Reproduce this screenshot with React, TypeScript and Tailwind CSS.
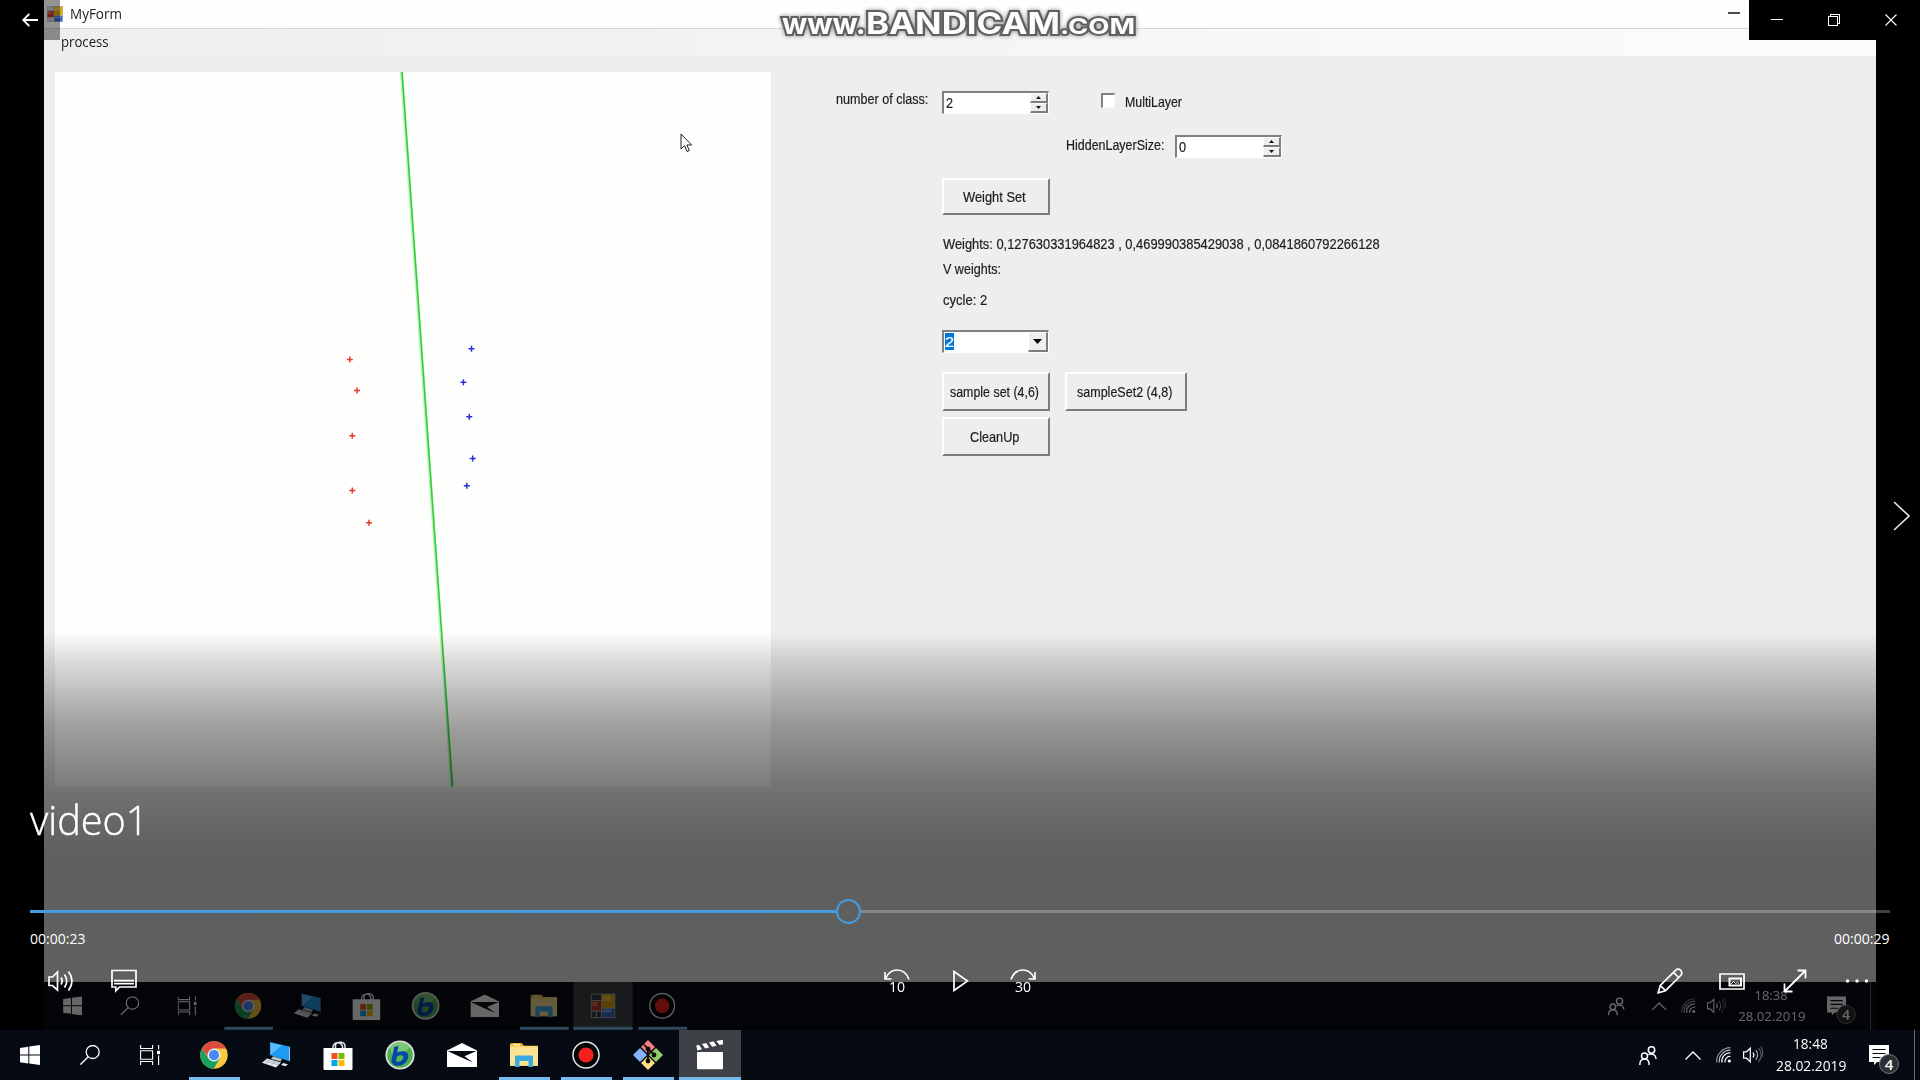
import React, { useLayoutEffect, useRef } from 'react';

/* Text squeezed or stretched horizontally to an exact width. */
function Fit({ w, className = '', children }: { w: number; className?: string; children: React.ReactNode }) {
  const ref = useRef<HTMLSpanElement>(null);
  useLayoutEffect(() => {
    const el = ref.current;
    if (!el) return;
    const apply = () => {
      if (el.offsetWidth) el.style.transform = `scaleX(${w / el.offsetWidth})`;
    };
    apply();
    document.fonts?.ready.then(apply);
  }, [w]);
  return (
    <span className={`block shrink-0 whitespace-pre ${className}`} style={{ width: w }}>
      <span ref={ref} className="inline-block origin-left align-top">
        {children}
      </span>
    </span>
  );
}

function Label({ w, className = '', children }: { w: number; className?: string; children: string }) {
  return (
    <Fit w={w} className={`font-["Liberation_Sans",sans-serif] text-[14.5px] leading-[18px] text-[#1c1c1c] [-webkit-text-stroke:0.2px] ${className}`}>
      {children}
    </Fit>
  );
}

function Spinner({ value, className = '' }: { value: string; className?: string }) {
  const btn =
    'flex h-[10px] w-[18px] items-center justify-center border-t border-l border-r-2 border-b-2 border-t-white border-l-white border-r-[#7d7d7d] border-b-[#7d7d7d] bg-[#eeeeed]';
  return (
    <div className={`flex h-[23px] w-[107px] shrink-0 justify-between border-t-2 border-l-2 border-r border-b border-t-[#808080] border-l-[#808080] border-r-white border-b-white bg-white ${className}`}>
      <Label w={7} className="ml-[2px] mt-px">{value}</Label>
      <div className="flex flex-col">
        <div className={btn}>
          <svg width="5" height="3" viewBox="0 0 5 3"><path d="M0 3 2.5 0 5 3z" fill="#111" /></svg>
        </div>
        <div className={btn}>
          <svg width="5" height="3" viewBox="0 0 5 3"><path d="M0 0 2.5 3 5 0z" fill="#111" /></svg>
        </div>
      </div>
    </div>
  );
}

function Button({ w, className = '', children }: { w: number; className?: string; children: string }) {
  return (
    <div className={`flex shrink-0 items-center justify-center border-t-2 border-l-2 border-r-2 border-b-2 border-t-white border-l-white border-r-[#7c7c7c] border-b-[#7c7c7c] pr-[3px] ${className}`}>
      <Label w={w}>{children}</Label>
    </div>
  );
}

function FormsIcon({ size, cell = '#3a3d48' }: { size: number; cell?: string }) {
  return (
    <svg width={size} height={size} viewBox="0 0 26 26">
      <rect width="26" height="26" fill="#b9bcc4" />
      <rect x="1" y="1" width="10" height="6" fill={cell} />
      <rect x="1" y="8" width="10" height="10" fill="#c0392b" />
      <rect x="2" y="9" width="5" height="4" fill="#e27a63" />
      <rect x="12" y="1" width="13" height="14" fill="#dca60c" />
      <rect x="13" y="2" width="8" height="6" fill="#f3cc4a" />
      <rect x="12" y="16" width="13" height="9" fill="#3a68c8" />
      <rect x="13" y="17" width="9" height="3" fill="#7ea2ea" />
      <rect x="1" y="19" width="4.5" height="6" fill={cell} />
      <rect x="6.5" y="19" width="4.5" height="6" fill={cell} />
    </svg>
  );
}

const icons = {
  windows: (
    <svg width="20" height="20" viewBox="0 0 20 20" fill="#fff">
      <path d="M0 2.900 8.300 1.700V9.500H0zM9.300 1.500 20 0v9.500H9.300zM0 10.500h8.300v7.900L0 17.200zM9.300 10.500H20V20L9.300 18.500z" />
    </svg>
  ),
  search: (
    <svg width="20" height="20" viewBox="0 0 20 20" fill="none" stroke="#fff" strokeWidth="1.300">
      <circle cx="12.700" cy="7" r="6.500" />
      <path d="M8.200 11.800.4 19.600" />
    </svg>
  ),
  taskview: (
    <svg width="20" height="20" viewBox="0 0 20 20" fill="none" stroke="#fff" strokeWidth="1.100">
      <path d="M.6 0v3.500h12V0M.6 20v-3.500h12V20M.6 5.700h12v8.600H.6zM18.600 0v4.500M18.600 10.500V20" />
      <rect x="17" y="5.800" width="3" height="3.400" fill="#fff" stroke="none" />
    </svg>
  ),
  chrome: (
    <svg width="28" height="28" viewBox="0 0 48 48">
      <circle cx="24" cy="24" r="23.500" fill="#fbc83c" />
      <path d="M3.650 12.250 14.300 30 24 34 34 29.500 23.500 47.500A23.500 23.500 0 0 1 3.650 12.250z" fill="#1ba15f" />
      <path d="M3.650 12.250A23.500 23.500 0 0 1 44.800 13H24L14 28z" fill="#dc4b3e" />
      <circle cx="24" cy="24" r="11" fill="#f4f4f4" />
      <circle cx="24" cy="24" r="8.800" fill="#4a8af4" />
    </svg>
  ),
  computer: (
    <svg width="28" height="26" viewBox="0 0 28 26">
      <path d="M8 0 27 4.500V19L8 13z" fill="#1e9bf0" />
      <path d="M8.500.8 20 3.400 8.500 12.500z" fill="#5cbcfb" />
      <path d="M27 4.500 28 5v14l-1 .5z" fill="#9cc9ea" />
      <path d="M11 14.200 20 17l-1.500 2.500L9 17z" fill="#b9c3cc" />
      <path d="M5 16.500 19 20.500 14 25.500 0 20.800z" fill="#e3e8ec" />
      <path d="M3 19 17 23M5 17.700 18 21.700M8 17.500 4 22M13 19l-4 4.500" stroke="#9ba6ae" strokeWidth=".6" />
      <path d="m21 21 5 1.300-2.500 2-4.500-1.300z" fill="#e3e8ec" />
    </svg>
  ),
  store: (
    <svg width="30" height="30" viewBox="0 0 30 30">
      <path d="M10 9V6.500a5 5.500 0 0 1 9.500 0V9M12.500 9V4.500a5 4 0 0 1 9.500 2V9" fill="none" stroke="#e8e8e8" strokeWidth="1.500" />
      <path d="M.5 8h29v21a1 1 0 0 1-1 1h-27a1 1 0 0 1-1-1z" fill="#fff" />
      <path d="M8.500 13h6v6h-6z" fill="#f25022" />
      <path d="M15.500 13h6v6h-6z" fill="#7fba00" />
      <path d="M8.500 20h6v6h-6z" fill="#00a4ef" />
      <path d="M15.500 20h6v6h-6z" fill="#ffb900" />
    </svg>
  ),
  bsplayer: (
    <svg width="30" height="30" viewBox="0 0 30 30">
      <circle cx="15" cy="15" r="13.700" fill="#4cb04f" stroke="#dcdedc" strokeWidth="1.800" />
      <path d="M5 7a13 13 0 0 1 20 0c-3 4-6 5-9 5l-9 3z" fill="#8fd488" opacity=".7" />
      <path d="M9 7 13.500 6 12.300 12.500C17 10.200 23.500 11 23.300 16c-.2 5-4.300 9.800-10 9.800-4.800 0-7.300-2.300-6.800-6.300L8.800 9z" fill="#0b45aa" />
      <path d="m12 16.500-1 4.500c1 1.800 6.900.5 7.400-3.800.2-2.400-4-2.400-6.400-.7z" fill="#56b852" />
    </svg>
  ),
  mail: (
    <svg width="30" height="24" viewBox="0 0 30 24">
      <path d="M0 7.500 15 0 30 7.500V24H0z" fill="#fff" />
      <path d="M.5 8H29.500L17.500 13.300 26 19.500 12.800 13.800z" fill="#070b12" />
    </svg>
  ),
  explorer: (
    <svg width="28" height="24" viewBox="0 0 28 24">
      <path d="M0 .8h12l1.500 2H28V22a.8.800 0 0 1-.8.800H.8A.8.800 0 0 1 0 22z" fill="#f8d775" />
      <path d="M1 0h10.500l2 3H1z" fill="#e9b41b" />
      <path d="M3 1h7v1.500H3z" fill="#fff" opacity=".8" />
      <path d="M0 4.500h28V22a.8.800 0 0 1-.8.800H.8A.8.800 0 0 1 0 22z" fill="#fde394" />
      <path d="M5 24V13.500a1 1 0 0 1 1-1h16a1 1 0 0 1 1 1V24h-4.500v-6h-9v6z" fill="#38ace0" />
    </svg>
  ),
  record: (
    <svg width="28" height="28" viewBox="0 0 28 28">
      <circle cx="14" cy="14" r="13" fill="#050505" stroke="#e6e6e6" strokeWidth="1.500" />
      <circle cx="14" cy="14" r="7.600" fill="#f4201f" />
    </svg>
  ),
  git: (
    <svg width="30" height="30" viewBox="0 0 30 30">
      <path d="M15 0 22 7 15 14 8 7z" fill="#f27f7d" />
      <path d="M23 8 30 15 23 22 16 15z" fill="#8ed069" />
      <path d="M7 8 14 15 7 22 0 15z" fill="#85b2fb" />
      <path d="M15 16 22 23 15 30 8 23z" fill="#fbe083" />
      <path d="M11 4.500 15 9v12M15 9l6.500 6" fill="none" stroke="#0b0b0d" strokeWidth="1.800" />
      <circle cx="15" cy="9" r="2.400" fill="#0b0b0d" />
      <circle cx="21" cy="15" r="2.400" fill="#0b0b0d" />
      <circle cx="15" cy="21" r="2.400" fill="#0b0b0d" />
    </svg>
  ),
  clapper: (
    <svg width="28" height="30" viewBox="0 0 28 30">
      <rect x="1" y="12" width="26" height="17.300" rx="1" fill="#fff" />
      <path d="M.3 5.500 3 4.700l3 4.600-4.700 1.200zM6 4 10.200 3l3 4.500-4 1zM13 2.400 17.500 1.300l3 4.500-4.300 1zM20.300.9 26.800-.2 27 4.200l-3.500.8z" fill="#fff" />
    </svg>
  ),
  forms: <FormsIcon size={26} />,
};

type TaskApp = { icon: keyof typeof icons; open?: boolean; active?: boolean };

const pinned: TaskApp[] = [
  { icon: 'chrome', open: true },
  { icon: 'computer' },
  { icon: 'store' },
  { icon: 'bsplayer' },
  { icon: 'mail' },
  { icon: 'explorer', open: true },
];

function VolumeTray() {
  return (
    <svg width="21" height="18" viewBox="0 0 21 18" fill="none" stroke="#fff" strokeWidth="1.200">
      <path d="M.6 5.800H3.500L7.300 2.200V15.800L3.500 12.200H.6z" />
      <path d="M10 6.500q1.800 2.500 0 5" />
      <path d="M12.800 4.200q3.600 4.800 0 9.600" opacity=".65" />
      <path d="M15.600 2.200q5 6.800 0 13.600M17.800.5q2.500 4 1.500 10.500" opacity=".3" />
    </svg>
  );
}

function Taskbar({ apps, time }: { apps: TaskApp[]; time: string }) {
  return (
    <div className="flex h-[50px] w-[1920px] bg-[#060b13] text-white">
      <div className="flex w-[60px] items-center justify-center">{icons.windows}</div>
      <div className="flex w-[60px] items-center justify-center">{icons.search}</div>
      <div className="flex w-[63px] items-center justify-center pr-[3px]">{icons.taskview}</div>
      {apps.map((a, i) => (
        <div key={i} className={`flex w-[62px] flex-col items-center ${a.active ? 'bg-[#3e4145]' : ''}`}>
          <div className="flex h-[47px] items-center pr-px pt-[2px]">{icons[a.icon]}</div>
          {a.open && <div className={a.active ? 'h-[3px] w-[62px] bg-[#76b9ed]' : 'h-[3px] w-[51px] bg-[#76b9ed]'} />}
        </div>
      ))}
      <div className="ml-auto flex h-[50px] items-center">
        <svg className="mr-[28px]" width="18" height="19" viewBox="0 0 18 19" fill="none" stroke="#fff" strokeWidth="1.500">
          <circle cx="12.500" cy="4" r="3.200" />
          <path d="M9.500 8.600q6.500-2 7.700 4.200" />
          <circle cx="5.500" cy="10" r="3" />
          <path d="M.8 19q0-6 4.700-6t4.700 6" />
        </svg>
        <svg className="mr-[15px]" width="16" height="9" viewBox="0 0 16 9" fill="none" stroke="#fff" strokeWidth="1.300">
          <path d="M.5 8.500 8 1l7.500 7.500" />
        </svg>
        <svg className="mr-[12px]" width="15" height="16" viewBox="0 0 15 16" fill="none" stroke="#fff" strokeWidth="1.200">
          <path d="M9 15.500A5 5 0 0 1 14.500 9.500" />
          <path d="M6 15.500A8 8 0 0 1 14.500 6" />
          <path d="M3.300 15.500A11 11 0 0 1 14.500 3.200" opacity=".75" />
          <path d="M.6 15.500A14 14 0 0 1 14.500.6" opacity=".55" />
          <circle cx="13.300" cy="14" r="1.600" fill="#fff" stroke="none" />
        </svg>
        <VolumeTray />
        <div className='ml-[12px] flex w-[70px] flex-col items-start font-["Open_Sans",sans-serif] text-[14px] leading-[22.500px]'>
          <Fit w={35} className="ml-[17px]">{time}</Fit>
          <Fit w={70}>28.02.2019</Fit>
        </div>
        <div className="relative ml-[23px] mr-[25px] h-[20px] w-[20px]">
          <svg width="20" height="20" viewBox="0 0 20 20">
            <path d="M0 0h20v17H8l-3 3v-3H0z" fill="#fff" />
            <path d="M3.500 4.500h13M3.500 8.500h13M3.500 12.500h8" stroke="#060b13" strokeWidth="1.200" />
          </svg>
          <div className='absolute left-[10px] top-[9px] flex h-[20px] w-[20px] items-center justify-center rounded-full border border-[#77797c] bg-[#2b2e33] font-["Open_Sans",sans-serif] text-[15px] font-semibold leading-none'>
            4
          </div>
        </div>
        <div className="h-[50px] w-[6px] border-l border-[#6a6d72]" />
      </div>
    </div>
  );
}

const red = [[349.8, 359.5], [357, 390.5], [352.3, 435.7], [352.3, 490.6], [369, 522.7]];
const blue = [[471.5, 348.7], [463.4, 382.2], [469.3, 416.7], [472.7, 458.5], [466.8, 485.8]];
const cross = (p: number[][]) => p.map(([x, y]) => `M${x - 55 - 3} ${y - 72}h6M${x - 55} ${y - 72 - 3}v6`).join('');

function Plot() {
  return (
    <div className="relative ml-[11px] mt-[16px] h-[715px] w-[716px] shrink-0 bg-[#fefefd]">
      <svg width="716" height="715" viewBox="0 0 716 715" fill="none">
        <path d="M346.500 0 397 715" stroke="#b4f5b4" strokeWidth="3.200" />
        <path d="M347 0 397.500 715" stroke="#35c93c" strokeWidth="1.500" />
        <path d={cross(red)} stroke="#e8382c" strokeWidth="1.500" />
        <path d={cross(blue)} stroke="#2a30e0" strokeWidth="1.500" />
      </svg>
      <svg className="absolute left-[625px] top-[61px]" width="12" height="20" viewBox="0 0 12 20">
        <path d="M1 1v15l3.600-3.400L7 18.500l2.300-1-2.400-5.500h4.700z" fill="#fff" stroke="#222" strokeWidth="1" />
      </svg>
    </div>
  );
}

function Logo() {
  const s = 'font-["Inter",sans-serif] font-bold text-[#fdfdfd] [-webkit-text-stroke:4px_#60605e] [paint-order:stroke_fill] [filter:drop-shadow(0_0_2px_#8a8a88)]';
  return (
    <div className="absolute left-[738px] top-[8px] flex h-[30px] items-baseline">
      <Fit w={84} className={`text-[28px] leading-[30px] ${s}`}>www.</Fit>
      <Fit w={194} className={`text-[30px] leading-[30px] ${s}`}>BANDICAM</Fit>
      <Fit w={75} className={`text-[22px] leading-[30px] ${s}`}>.COM</Fit>
    </div>
  );
}

function FormWindow() {
  return (
    <div className="relative flex h-[982px] flex-col bg-[#eeeeed]">
      <div className="flex h-[29px] items-center justify-between border-b border-[#d6d6d6] bg-[#fefefe] pl-[3px] pr-[136px]">
        <div className="flex items-center gap-[7px]">
          <FormsIcon size={16} cell="#d4d4d6" />
          <Fit w={52} className='font-["Open_Sans",sans-serif] text-[14px] leading-[20px] text-[#1b1b1b]'>MyForm</Fit>
        </div>
        <div className="mb-[3px] h-[2px] w-[12px] bg-[#4a4a4a]" />
      </div>
      <div className="flex h-[27px] bg-linear-to-r from-[#eeeeed] to-[#fcfcfa] pl-[17px] pt-[3px]">
        <Fit w={48} className='font-["Open_Sans",sans-serif] text-[14px] leading-[20px] text-[#1b1b1b]'>process</Fit>
      </div>
      <div className="flex">
        <Plot />
        <div className="flex flex-col pl-[65px] pt-[34px]">
          <div className="flex items-start">
            <Label w={92}>number of class:</Label>
            <Spinner value="2" className="ml-[14px] mt-px" />
            <div className="ml-[52px] mt-[3px] h-[15px] w-[14px] border-t-2 border-l-2 border-r border-b border-t-[#808080] border-l-[#808080] border-r-[#f8f8f8] border-b-[#f8f8f8] bg-white" />
            <Label w={57} className="ml-[10px] mt-[3px]">MultiLayer</Label>
          </div>
          <div className="ml-[230px] mt-[21px] flex items-start">
            <Label w={98} className="mt-px">HiddenLayerSize:</Label>
            <Spinner value="0" className="ml-[11px]" />
          </div>
          <div className="ml-[106px] flex flex-col pt-[20px]">
            <Button w={63} className="h-[37px] w-[108px]">Weight Set</Button>
            <Label w={437} className="ml-px mt-[20px]">Weights: 0,127630331964823 , 0,469990385429038 , 0,0841860792266128</Label>
            <Label w={58} className="ml-px mt-[7px]">V weights:</Label>
            <Label w={44} className="ml-px mt-[13px]">cycle: 2</Label>
            <div className="mt-[21px] flex h-[23px] w-[107px] justify-between border-t-2 border-l-2 border-r border-b border-t-[#808080] border-l-[#808080] border-r-white border-b-white bg-white">
              <Label w={9} className="ml-px mt-px h-[17px] overflow-hidden bg-[#0078d7] leading-[17px] !text-white">2</Label>
              <div className="flex h-[20px] w-[20px] items-center justify-center border-t border-l border-r-2 border-b-2 border-t-white border-l-white border-r-[#7d7d7d] border-b-[#7d7d7d] bg-[#eeeeed]">
                <svg width="9" height="5" viewBox="0 0 9 5"><path d="M0 0h9L4.500 5z" fill="#000" /></svg>
              </div>
            </div>
            <div className="mt-[19px] flex gap-[15px]">
              <Button w={89} className="h-[39px] w-[108px]">sample set (4,6)</Button>
              <Button w={95} className="h-[39px] w-[122px]">sampleSet2 (4,8)</Button>
            </div>
            <Button w={49} className="mt-[6px] h-[39px] w-[108px]">CleanUp</Button>
          </div>
        </div>
      </div>
      <Logo />
    </div>
  );
}

function Jump({ label, flip }: { label: string; flip?: boolean }) {
  return (
    <div className="flex w-[26px] flex-col items-center">
      <svg width="26" height="11" viewBox="0 0 26 11" className={flip ? 'scale-x-[-1]' : ''} fill="none" stroke="#fff" strokeWidth="1.600">
        <path d="M25 10.500C22.500 3.500 17.500 1 13 1 8 1 4 4 1.500 9.500M1 3v7h6.500" />
      </svg>
      <Fit w={16} className='-mt-px font-["Open_Sans",sans-serif] text-[15px] leading-[14px] text-white'>{label}</Fit>
    </div>
  );
}

function PlayerOverlay() {
  return (
    <div className="absolute inset-0 flex flex-col text-white">
      <div className="flex h-[40px] items-start justify-between">
        <div className="flex h-[40px] w-[60px] items-center bg-black/42 pl-[22px]">
          <svg width="16" height="14" viewBox="0 0 16 14" fill="none" stroke="#fff" strokeWidth="1.800">
            <path d="M16 7H1.200M7.300.8 1.200 7l6.100 6.200" />
          </svg>
        </div>
        <div className="flex h-[40px] w-[171px] items-center bg-black">
          <svg width="171" height="40" viewBox="0 0 171 40" fill="none" stroke="#fff" shapeRendering="crispEdges">
            <path d="M22 19.500h12M79.500 16.500h9v9h-9zM81.500 16v-1.500h9v9H89" />
            <path d="m136.500 14.500 11 11m0-11-11 11" shapeRendering="auto" strokeWidth="1.100" />
          </svg>
        </div>
      </div>
      <div className="flex h-[592px] items-end justify-end pb-[101px] pr-[10px]">
        <svg width="17" height="30" viewBox="0 0 17 30" fill="none" stroke="#e8e8e8" strokeWidth="1.600">
          <path d="m1 1 15 14L1 29" />
        </svg>
      </div>
      <div className="flex flex-1 flex-col bg-[linear-gradient(to_bottom,rgba(0,0,0,0)_0px,rgba(0,0,0,0.14)_30px,rgba(0,0,0,0.376)_95px,rgba(0,0,0,0.505)_150px,rgba(0,0,0,0.57)_190px,rgba(0,0,0,0.6)_225px)] px-[30px]">
        <Fit w={118} className='mt-[159px] font-["Open_Sans",sans-serif] text-[41px] font-light leading-[56px] [-webkit-text-stroke:0.4px]'>video1</Fit>
        <div className="mt-[52px] flex h-[25px] items-center">
          <div className="h-[3px] w-[806px] bg-[#429ce3]" />
          <div className="h-[25px] w-[25px] rounded-full border-2 border-[#429ce3]" />
          <div className="h-[3px] flex-1 bg-white/25" />
        </div>
        <div className='mt-[4px] flex justify-between pr-px font-["Open_Sans",sans-serif] text-[14px] leading-[22px]'>
          <Fit w={55}>00:00:23</Fit>
          <Fit w={55}>00:00:29</Fit>
        </div>
        <div className="mt-[18px] flex h-[26px] items-center pl-[18px] pr-[19px]">
          <svg width="26" height="22" viewBox="0 0 26 22" fill="none" stroke="#fff" strokeWidth="1.700">
            <path d="M1 7h3.500L9.500 2v18L4.500 15.500H1z" />
            <path d="M13 7.500q2.400 3.500 0 7M16.500 4.500q4.500 6.500 0 13M20.500 1.500q7 9.500 0 19" />
          </svg>
          <svg className="ml-[37px]" width="26" height="24" viewBox="0 0 26 24" fill="none" stroke="#fff" strokeWidth="1.700">
            <path d="M1 1.500h24v16.500H8.500L4.800 21.800V18H1zM3 11.700h20M3 14.700h20" />
          </svg>
          <div className="ml-[747px] flex items-center">
            <Jump label="10" />
            <svg className="ml-[43px]" width="16" height="22" viewBox="0 0 16 22" fill="none" stroke="#fff" strokeWidth="1.700">
              <path d="M1 1.500v19L14.500 11z" />
            </svg>
            <div className="ml-[41px]"><Jump label="30" flip /></div>
          </div>
          <div className="ml-auto flex items-center pr-[2px]">
            <svg width="26" height="26" viewBox="0 0 26 26" fill="none" stroke="#fff" strokeWidth="1.700">
              <path d="M1.200 24.800 3.300 17.500 18.500 2.300a3.300 3.300 0 0 1 5.200 5.200L8.500 22.700zM3.300 17.500l5.200 5.200M16.500 4.300l5.200 5.200" />
            </svg>
            <svg className="ml-[36px]" width="26" height="17" viewBox="0 0 26 17" fill="none" stroke="#fff" strokeWidth="1.700">
              <path d="M1 1h24v15H1z" />
              <path d="M10.500 5.500h11.500v7H10.500z" strokeWidth="2" />
              <path d="m12 11 2.500-2.500 2 2 2-1 2 1.500" strokeWidth="1" />
            </svg>
            <svg className="ml-[38px]" width="24" height="24" viewBox="0 0 24 24" fill="none" stroke="#fff" strokeWidth="1.800">
              <path d="M1.500 22.500l21-21M14.500 1.500h8v8M1.500 14.500v8h8" />
            </svg>
            <svg className="ml-[38px]" width="24" height="4" viewBox="0 0 24 4" fill="#fff">
              <circle cx="2.500" cy="2" r="1.700" />
              <circle cx="12" cy="2" r="1.700" />
              <circle cx="21.500" cy="2" r="1.700" />
            </svg>
          </div>
        </div>
      </div>
    </div>
  );
}

export default function App() {
  return (
    <div className="flex h-[1080px] w-[1920px] flex-col overflow-hidden bg-black">
      <div className="relative h-[1030px] overflow-hidden px-[44px]">
        <FormWindow />
        <div className="h-[48px] overflow-hidden bg-[#060b13]">
          <div className="w-[1920px] origin-top-left scale-[0.954]">
            <Taskbar apps={[...pinned, { icon: 'forms', open: true, active: true }, { icon: 'record', open: true }]} time="18:38" />
          </div>
        </div>
        <PlayerOverlay />
      </div>
      <Taskbar
        apps={[...pinned, { icon: 'record', open: true }, { icon: 'git', open: true }, { icon: 'clapper', open: true, active: true }]}
        time="18:48"
      />
    </div>
  );
}
